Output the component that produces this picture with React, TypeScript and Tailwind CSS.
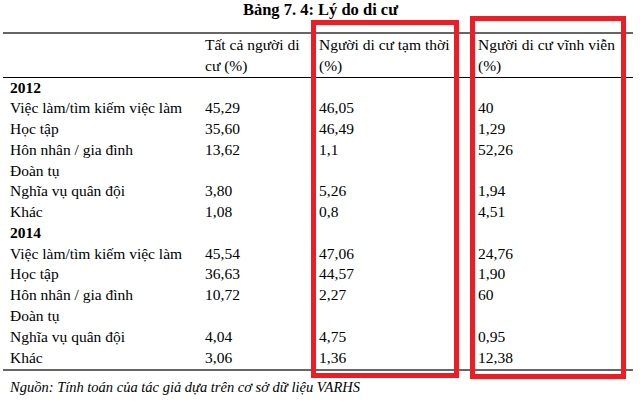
import React from 'react';

type Row = { label: string; a?: string; b?: string; c?: string; year?: boolean };

const rows: Row[] = [
  { label: '2012', year: true },
  { label: 'Việc làm/tìm kiếm việc làm', a: '45,29', b: '46,05', c: '40' },
  { label: 'Học tập', a: '35,60', b: '46,49', c: '1,29' },
  { label: 'Hôn nhân / gia đình', a: '13,62', b: '1,1', c: '52,26' },
  { label: 'Đoàn tụ' },
  { label: 'Nghĩa vụ quân đội', a: '3,80', b: '5,26', c: '1,94' },
  { label: 'Khác', a: '1,08', b: '0,8', c: '4,51' },
  { label: '2014', year: true },
  { label: 'Việc làm/tìm kiếm việc làm', a: '45,54', b: '47,06', c: '24,76' },
  { label: 'Học tập', a: '36,63', b: '44,57', c: '1,90' },
  { label: 'Hôn nhân / gia đình', a: '10,72', b: '2,27', c: '60' },
  { label: 'Đoàn tụ' },
  { label: 'Nghĩa vụ quân đội', a: '4,04', b: '4,75', c: '0,95' },
  { label: 'Khác', a: '3,06', b: '1,36', c: '12,38' },
];

const cols = 'grid grid-cols-[195px_114px_159px_1fr] pl-[7px]';

export default function App() {
  return (
    <div className="relative w-[640px] h-[414px] bg-white text-black [font-family:Liberation_Serif,serif] overflow-hidden">
      <h1 className="text-center text-[16.5px] leading-[20px] font-bold pl-[1px]">Bảng 7. 4: Lý do di cư</h1>

      <div className="mt-[12px] ml-[3px] w-[630px]">
        <div className="h-[2px] bg-[#666]" />
        <div className={`${cols} text-[15.5px] leading-[20.8px] pt-[1px]`}>
          <div />
          <div>Tất cả người di<br />cư (%)</div>
          <div>Người di cư tạm thời<br />(%)</div>
          <div>Người di cư vĩnh viễn<br />(%)</div>
        </div>
        <div className="h-px bg-black" />
        <div className="text-[15.5px] leading-[20.77px]">
          {rows.map((r, i) => (
            <div key={i} className={cols}>
              <div className={r.year ? 'font-bold' : ''}>{r.label}</div>
              <div>{r.a}</div>
              <div>{r.b}</div>
              <div>{r.c}</div>
            </div>
          ))}
        </div>
        <div className="mt-[1px] h-[2px] bg-[#666]" />
      </div>

      <p className="mt-[6px] pl-[10px] text-[14.5px] leading-[20px] italic">
        Nguồn: Tính toán của tác giả dựa trên cơ sở dữ liệu VARHS
      </p>

      {/* red highlight boxes */}
      <div className="absolute left-[311px] top-[20px] w-[148px] h-[358px] border-[5px] border-[#ee1c25]" />
      <div className="absolute left-[470px] top-[16px] w-[156px] h-[363px] border-[5px] border-[#ee1c25]" />
    </div>
  );
}
